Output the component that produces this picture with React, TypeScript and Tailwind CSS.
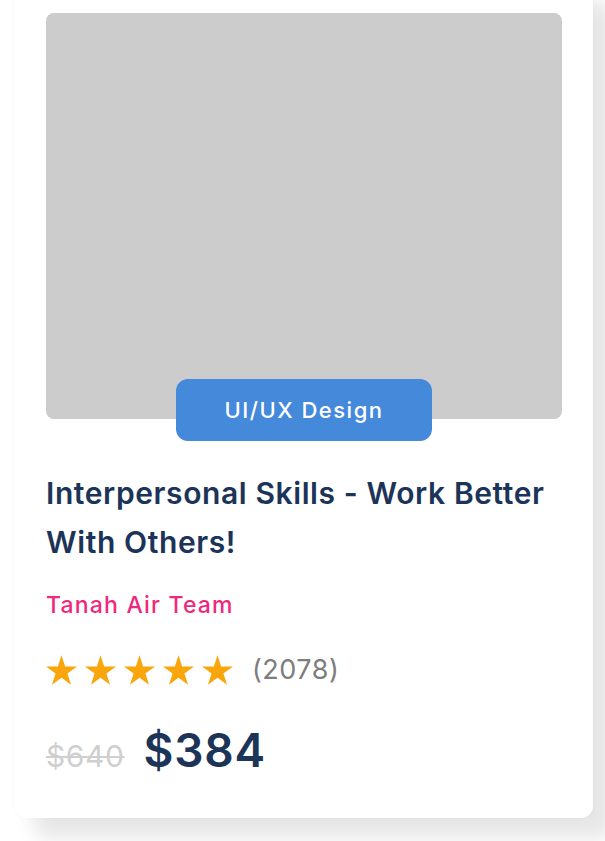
import React from "react";

function Star() {
  return (
    <svg width="31" height="30" viewBox="2.4 0 95.2 90.5" className="block">
      <polygon
        points="50,0 61.2,34.5 97.6,34.5 68.2,55.9 79.4,90.5 50,69.1 20.6,90.5 31.8,55.9 2.4,34.5 38.8,34.5"
        fill="#f9a50c"
      />
    </svg>
  );
}

export default function App() {
  return (
    <div className="h-[841px] w-[605px] overflow-hidden bg-white font-['Inter',sans-serif]">
      <div className="ml-[14px] -mt-[19px] h-[837px] w-[579px] rounded-xl bg-white pl-8 pr-[31px] pt-8 shadow-[20px_20px_20px_rgba(0,0,0,0.1),0_0_3px_rgba(0,0,0,0.04)]">
        <div className="relative h-[406px] w-[516px] rounded-lg bg-[#cccccc]">
          <div className="absolute -bottom-[22px] left-1/2 flex h-[62px] w-[256px] -translate-x-1/2 items-center justify-center rounded-xl bg-[#4589db] text-[22px] font-medium tracking-[1.5px] text-white">
            UI/UX Design
          </div>
        </div>
        <h1 className="mt-[50px] text-[30px] font-semibold leading-[49px] tracking-[0.6px] text-[#1b3458]">
          Interpersonal Skills - Work Better With Others!
        </h1>
        <div className="mt-[24px] text-[23px] font-medium leading-[28px] tracking-[1.2px] text-[#f0287c]">
          Tanah Air Team
        </div>
        <div className="mt-[36px] flex items-center">
          <div className="flex gap-[8px]">
            <Star />
            <Star />
            <Star />
            <Star />
            <Star />
          </div>
          <span className="ml-[19px] text-[27px] leading-[30px] tracking-[0.5px] text-[#7d7d7d]">(2078)</span>
        </div>
        <div className="mt-[37px] flex items-baseline">
          <span className="text-[30px] leading-[40px] tracking-[0.6px] text-[#cfcfcf] line-through decoration-[2px]">$640</span>
          <span className="ml-[19px] text-[46px] font-semibold leading-[56px] tracking-[0.8px] text-[#1b3458]">$384</span>
        </div>
      </div>
    </div>
  );
}
